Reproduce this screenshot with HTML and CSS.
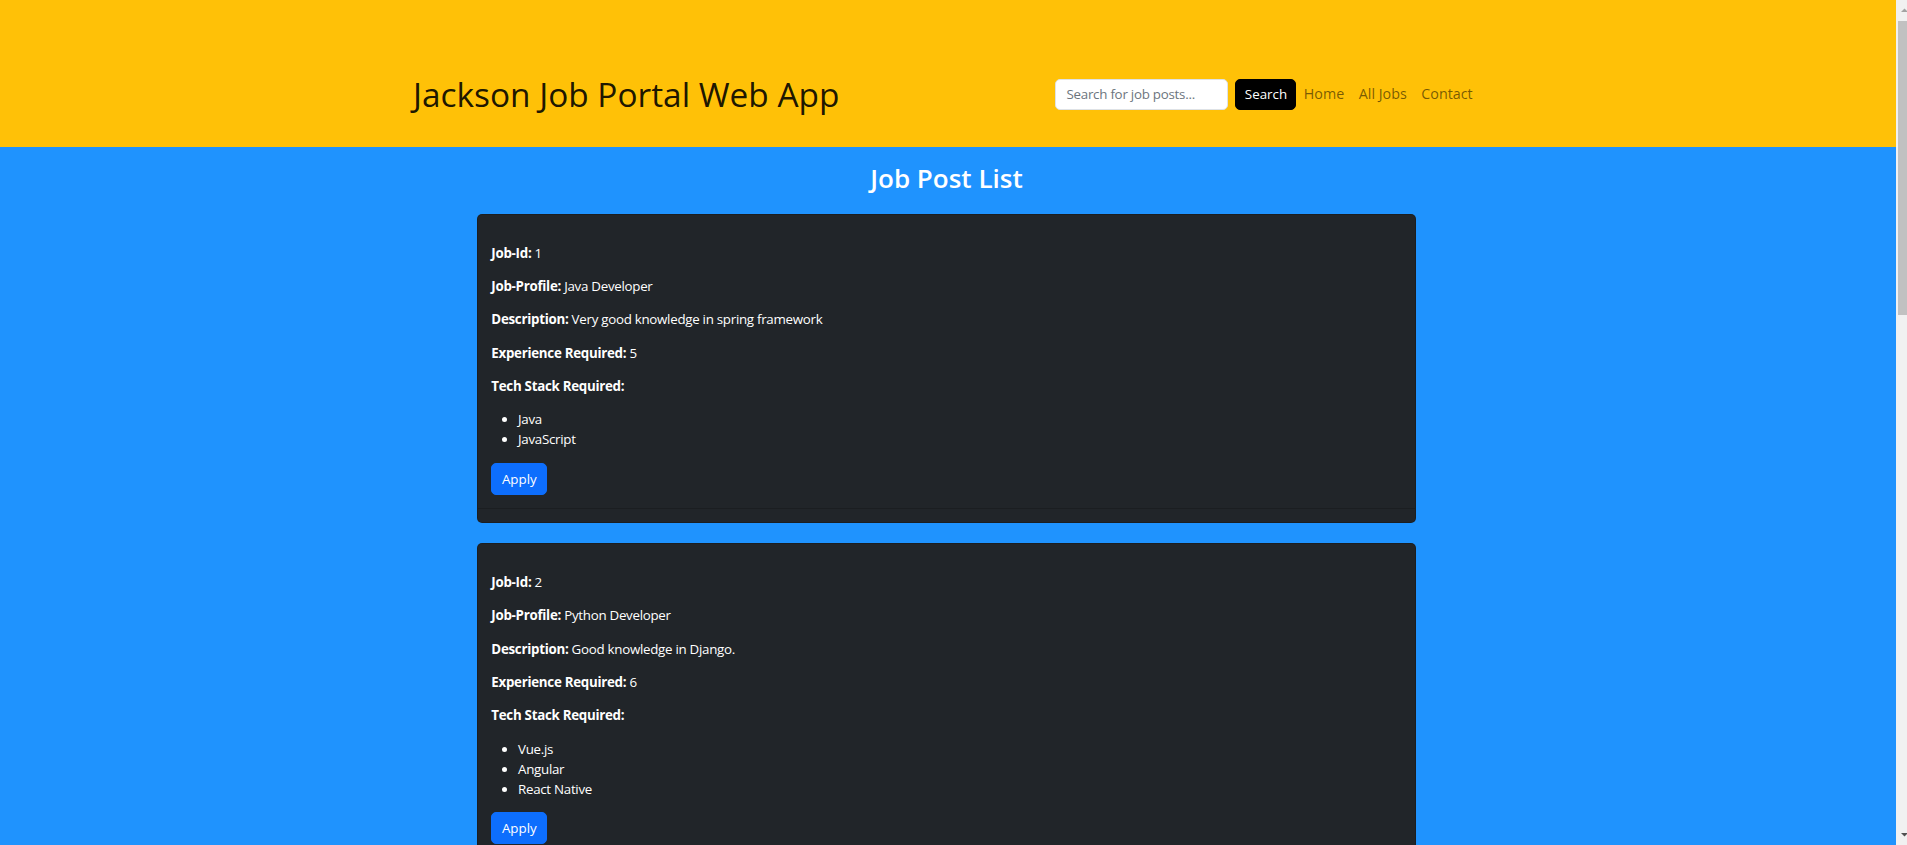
FILE: index.html
```html
<!DOCTYPE html>
<html lang="en">
<head>
<meta charset="utf-8">
<title>Jackson Job Portal Web App</title>
<link rel="stylesheet" href="styles.css">
</head>
<body>
<div class="page">
  <div class="viewport">
    <header class="topbar">
      <div class="topbar-inner">
        <h1 class="brand">Jackson Job Portal Web App</h1>
        <div class="topbar-right">
          <form class="search">
            <input class="search-input" type="text" placeholder="Search for job posts...">
            <button class="search-btn" type="button">Search</button>
          </form>
          <nav class="nav">
            <a class="nav-link" href="#">Home</a>
            <a class="nav-link" href="#">All Jobs</a>
            <a class="nav-link" href="#">Contact</a>
          </nav>
        </div>
      </div>
    </header>
    <main class="content">
      <h2 class="list-title">Job Post List</h2>
      <div class="cards">
        <article class="card">
          <div class="card-body">
            <p><strong>Job-Id:</strong> 1</p>
            <p><strong>Job-Profile:</strong> Java Developer</p>
            <p><strong>Description:</strong> Very good knowledge in spring framework</p>
            <p><strong>Experience Required:</strong> 5</p>
            <p><strong>Tech Stack Required:</strong></p>
            <ul>
              <li>Java</li>
              <li>JavaScript</li>
            </ul>
            <button class="apply-btn" type="button">Apply</button>
          </div>
          <div class="card-footer"></div>
        </article>
        <article class="card">
          <div class="card-body">
            <p><strong>Job-Id:</strong> 2</p>
            <p><strong>Job-Profile:</strong> Python Developer</p>
            <p><strong>Description:</strong> Good knowledge in Django.</p>
            <p><strong>Experience Required:</strong> 6</p>
            <p><strong>Tech Stack Required:</strong></p>
            <ul>
              <li>Vue.js</li>
              <li>Angular</li>
              <li>React Native</li>
            </ul>
            <button class="apply-btn" type="button">Apply</button>
          </div>
          <div class="card-footer"></div>
        </article>
      </div>
    </main>
  </div>
  <div class="scrollbar">
    <svg width="11" height="845" viewBox="0 0 11 845">
      <rect width="11" height="845" fill="#f1f1f1"/>
      <rect x="2" y="21" width="9" height="294" fill="#c1c1c1"/>
      <path d="M5 12 L8.5 8.5 L12 12 Z" fill="#a3a3a3"/>
      <path d="M5 833 L12 833 L8.5 836.5 Z" fill="#505050"/>
    </svg>
  </div>
</div>
</body>
</html>
```
FILE: styles.css
```css
* { box-sizing: border-box; }

html, body {
  margin: 0;
  height: 100%;
  overflow: hidden;
}

body {
  font-family: "Open Sans", "Noto Sans", sans-serif;
  font-size: 13.33px;
  line-height: 20px;
  color: #fff;
}

.page {
  display: flex;
  height: 845px;
}

.viewport {
  flex: 1;
  min-width: 0;
  background: #1f93fe;
  overflow: hidden;
}

.scrollbar {
  width: 11px;
  flex: none;
  line-height: 0;
}

.topbar {
  background: #ffc107;
  height: 147px;
  padding: 70px 3px 0 0;
}

.topbar-inner {
  width: 1067px;
  margin: 0 auto;
  height: 48px;
  display: flex;
  align-items: center;
  justify-content: space-between;
}

.brand {
  margin: 0;
  font-size: 33.4px;
  line-height: 40px;
  font-weight: 400;
  color: rgba(0, 0, 0, 0.9);
}

.topbar-right {
  display: flex;
  align-items: center;
}

.search {
  display: flex;
  margin: 0;
}

.search-input {
  width: 173px;
  height: 31px;
  margin-right: 7px;
  padding: 5px 10px;
  border: 1px solid #dee2e6;
  border-radius: 5px;
  background: #fff;
  color: #212529;
  font-family: inherit;
  font-size: 13.33px;
  line-height: 20px;
  letter-spacing: -0.25px;
}

.search-input::placeholder {
  color: #6c757d;
}

.search-btn {
  width: 61px;
  height: 31px;
  padding: 0;
  border: 1px solid #000;
  border-radius: 5px;
  background: #000;
  color: #fff;
  font-family: inherit;
  font-size: 13.33px;
  line-height: 20px;
}

.nav {
  display: flex;
}

.nav-link {
  padding: 0 7.3px;
  font-size: 14.3px;
  line-height: 22px;
  color: rgba(0, 0, 0, 0.55);
  text-decoration: none;
}

.content {
  padding: 15px 3px 0 0;
}

.list-title {
  margin: 0 0 20px;
  text-align: center;
  font-size: 26px;
  line-height: 32px;
  font-weight: 600;
  color: #fff;
}

.cards {
  width: 939px;
  margin: 0 auto;
  display: flex;
  flex-direction: column;
  gap: 20px;
}

.card {
  background: #212529;
  border: 1px solid rgba(0, 0, 0, 0.175);
  border-radius: 5px;
  letter-spacing: -0.28px;
}

.card-body {
  padding: 27.67px 13.33px 13.33px;
}

.card-body p {
  margin: 0 0 13.33px;
}

.card-body strong {
  font-weight: 700;
}

.card-body ul {
  margin: 0 0 13.33px;
  padding-left: 26.67px;
}

.apply-btn {
  display: inline-block;
  width: 56px;
  height: 32px;
  padding: 0;
  border: 1px solid #0d6efd;
  border-radius: 5px;
  background: #0d6efd;
  color: #fff;
  font-family: inherit;
  font-size: 13.33px;
  line-height: 20px;
  vertical-align: top;
}

.card-footer {
  height: 14.33px;
  border-top: 1px solid rgba(0, 0, 0, 0.175);
}
```
